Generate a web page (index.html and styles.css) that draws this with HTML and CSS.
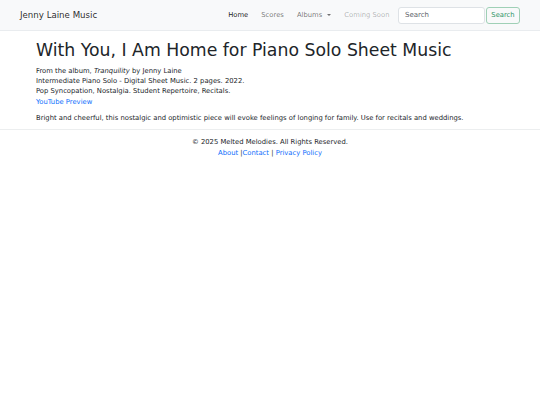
FILE: index.html
```html
<!DOCTYPE html>
<html lang="en">
<head>
<meta charset="utf-8">
<title>With You, I Am Home</title>
<link rel="stylesheet" href="styles.css">
</head>
<body>
<nav class="navbar">
  <a class="brand" href="#">Jenny Laine Music</a>
  <ul class="nav">
    <li><a class="nav-link active" href="#">Home</a></li>
    <li><a class="nav-link" href="#">Scores</a></li>
    <li><a class="nav-link dropdown" href="#">Albums <span class="caret"></span></a></li>
    <li><a class="nav-link disabled" href="#">Coming Soon</a></li>
  </ul>
  <form class="search">
    <input class="search-input" type="search" placeholder="Search">
    <button class="search-btn" type="button">Search</button>
  </form>
</nav>
<main class="content">
  <h1 class="title">With You, I Am Home for Piano Solo Sheet Music</h1>
  <p class="meta">From the album, <em>Tranquility</em> by Jenny Laine<br>
  Intermediate Piano Solo - Digital Sheet Music. 2 pages. 2022.<br>
  Pop Syncopation, Nostalgia. Student Repertoire, Recitals.<br>
  <a class="link" href="#">YouTube Preview</a></p>
  <p class="desc">Bright and cheerful, this nostalgic and optimistic piece will evoke feelings of longing for family. Use for recitals and weddings.</p>
</main>
<footer class="footer">
  <div>© 2025 Melted Melodies. All Rights Reserved.</div>
  <div><a class="link" href="#">About</a> |<a class="link" href="#">Contact</a> | <a class="link" href="#">Privacy Policy</a></div>
</footer>
</body>
</html>
```
FILE: styles.css
```css
* { box-sizing: border-box; }
html, body { margin: 0; padding: 0; }
body {
  font-family: "DejaVu Sans", sans-serif;
  font-size: 6.8px;
  line-height: 1.5;
  color: #212529;
  background: #fff;
}
a { text-decoration: none; }
.navbar {
  height: 31px;
  background: #f8f9fa;
  border-bottom: 1px solid #e9ecef;
  display: flex;
  align-items: center;
  padding: 0 20px 0 20px;
}
.brand {
  font-size: 8.65px;
  color: rgba(0,0,0,0.85);
  flex: 1;
}
.nav {
  list-style: none;
  margin: 0 2px 0 0;
  padding: 0;
  display: flex;
}
.nav-link {
  display: block;
  padding: 0 6.5px;
  color: rgba(0,0,0,0.55);
  font-size: 6.8px;
}
.nav-link.active { color: rgba(0,0,0,0.9); }
.nav-link.disabled { color: rgba(0,0,0,0.3); }
.caret {
  display: inline-block;
  width: 0; height: 0;
  margin-left: 3px;
  vertical-align: 1px;
  border-top: 2.5px solid rgba(0,0,0,0.55);
  border-left: 2.5px solid transparent;
  border-right: 2.5px solid transparent;
}
.search { display: flex; gap: 1px; }
.search-input {
  width: 87px;
  height: 17px;
  border: 1px solid #dee2e6;
  border-radius: 3px;
  padding: 0 6px;
  font: inherit;
  font-size: 7px;
  background: #fff;
  color: #212529;
}
.search-input::placeholder { color: #5c636a; }
.search-btn {
  height: 17px;
  width: 34px;
  padding: 0;
  border: 1px solid #9fd0b6;
  border-radius: 3px;
  background: transparent;
  color: #2f9466;
  font: inherit;
  font-size: 6.8px;
}
.content { padding: 9px 36px 0 36px; }
.title {
  font-size: 17.3px;
  font-weight: 400;
  line-height: 1.2;
  margin: 0 0 5px 0;
}
.meta { margin: 0 0 6px 0; line-height: 10.3px; }
.desc { margin: 0; line-height: 10.3px; }
.link { color: #0d6efd; }
.footer {
  margin-top: 6px;
  border-top: 1px solid #eceeef;
  text-align: center;
  padding-top: 7px;
  line-height: 10.3px;
}
```
